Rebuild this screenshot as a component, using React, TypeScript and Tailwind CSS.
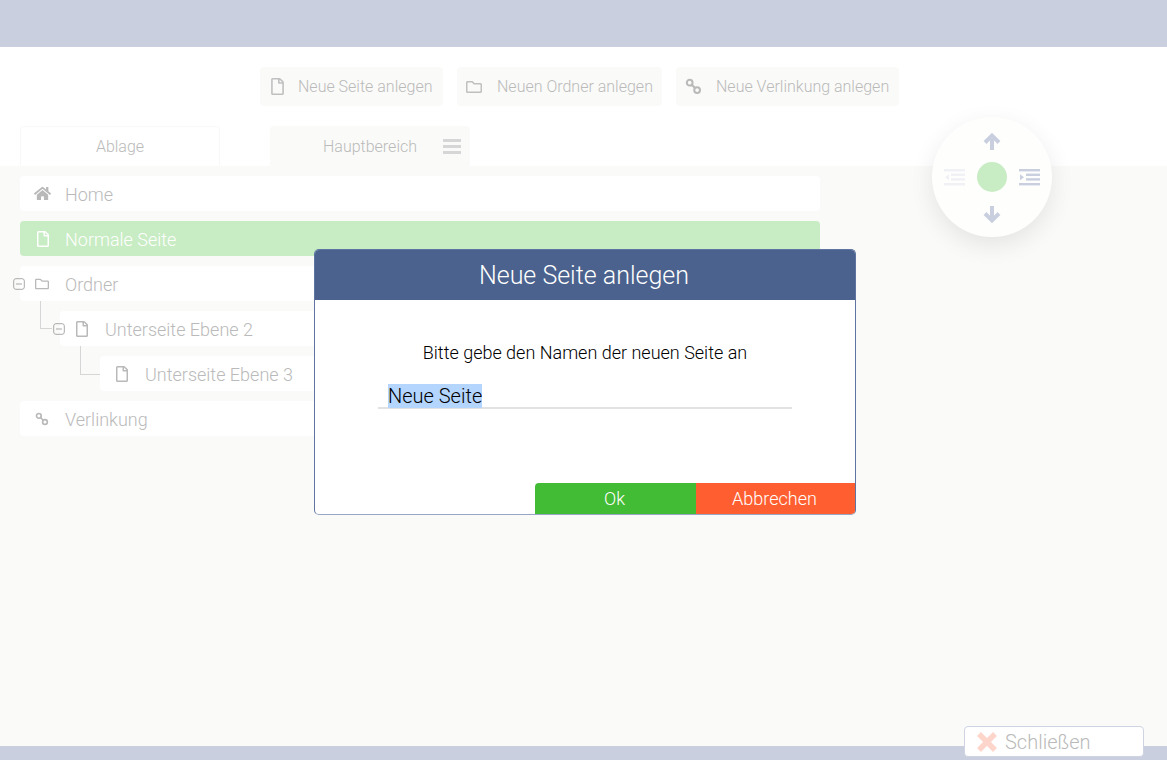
import React from "react";
import { FaRegFile, FaRegFolder, FaHome } from "react-icons/fa";

const LinkIcon = ({ className = "" }: { className?: string }) => (
  <svg viewBox="0 0 16 16" className={className} fill="none" stroke="currentColor" strokeWidth="1.9">
    <circle cx="4.4" cy="4.4" r="2.7" />
    <circle cx="11.4" cy="11.4" r="2.7" />
    <path d="M6.4 6.4l3 3" />
  </svg>
);

const Minus = () => (
  <svg viewBox="0 0 12 12" className="h-3 w-3 text-[#a9a9a9]" fill="none" stroke="currentColor" strokeWidth="1">
    <rect x="0.7" y="0.7" width="10.6" height="10.6" rx="2.2" />
    <path d="M3 6h6" />
  </svg>
);

const Arrow = ({ d, className = "" }: { d: string; className?: string }) => (
  <svg viewBox="0 0 20 20" className={`absolute h-5 w-5 text-[#c9cfdf] ${className}`} fill="none" stroke="currentColor" strokeWidth="4">
    <path d={d} />
  </svg>
);

const Lines = ({ outdent, className = "" }: { outdent?: boolean; className?: string }) => (
  <svg viewBox="0 0 21 17" className={`absolute h-[17px] w-[21px] ${className}`} fill="currentColor">
    <rect x="0" y="0" width="21" height="2.4" />
    <rect x="7" y="4.6" width="14" height="2.4" />
    <rect x="7" y="9.2" width="14" height="2.4" />
    <rect x="0" y="14" width="21" height="2.4" />
    {outdent ? <path d="M5 5.2v6l-4-3z" /> : <path d="M1 5.2v6l4-3z" />}
  </svg>
);

const Tool = ({ icon, label, w, gap }: { icon: React.ReactNode; label: string; w: string; gap: string }) => (
  <div className={`flex h-[39px] items-center rounded bg-[#fafaf9] pl-[9px] text-base font-light text-[#bababa] ${w} ${gap}`}>
    {icon}
    <span>{label}</span>
  </div>
);

const Row = ({ w, ml, icon, label, active, before }: { w: string; ml: string; icon: React.ReactNode; label: string; active?: boolean; before?: React.ReactNode }) => (
  <div className={`relative flex h-[35px] items-center rounded pl-[14px] text-lg font-light ${w} ${ml} ${active ? "bg-[#c8ecc3] text-white" : "bg-white text-[#bababa]"}`}>
    {before}
    <span className="flex w-[31px] shrink-0 items-center">{icon}</span>
    <span className="pt-[2px]">{label}</span>
  </div>
);

export default function App() {
  return (
    <div className="relative flex h-[760px] w-[1167px] flex-col overflow-hidden bg-white font-['Roboto',sans-serif]">
      <div className="h-[47px] bg-[#c9cfdf]" />
      <div className="flex gap-[14px] pl-[260px] pt-5">
        <Tool w="w-[183px]" gap="gap-[12px]" icon={<FaRegFile className="h-[17px] w-[17px] text-[#c0c0c0]" />} label="Neue Seite anlegen" />
        <Tool w="w-[205px]" gap="gap-[15px]" icon={<FaRegFolder className="h-4 w-4 text-[#c0c0c0]" />} label="Neuen Ordner anlegen" />
        <Tool w="w-[223px]" gap="gap-[14px]" icon={<LinkIcon className="h-[17px] w-[17px] text-[#b9b9b9]" />} label="Neue Verlinkung anlegen" />
      </div>
      <div className="mt-5 flex gap-[50px] pl-5">
        <div className="flex h-10 w-[200px] items-center justify-center rounded-t border border-b-0 border-[#f8f8f6] pt-px text-base font-light text-[#bababa]">Ablage</div>
        <div className="flex h-10 w-[200px] items-center rounded-t bg-[#fafaf9] pl-[53px] pt-px text-base font-light text-[#bababa]">
          <span>Hauptbereich</span>
          <svg viewBox="0 0 18 15" className="ml-[26px] h-[15px] w-[18px] text-[#d6d6d6]" fill="currentColor">
            <rect y="0" width="18" height="3" />
            <rect y="6" width="18" height="3" />
            <rect y="12" width="18" height="3" />
          </svg>
        </div>
      </div>
      <div className="relative flex flex-1 flex-col gap-[10px] bg-[#fafaf9] pl-5 pt-[10px]">
        <Row w="w-[800px]" ml="" icon={<FaHome className="h-[17px] w-[17px] text-[#b9b9b9]" />} label="Home" />
        <Row w="w-[800px]" ml="" active icon={<FaRegFile className="ml-px h-4 w-4 text-white" />} label="Normale Seite" />
        <Row
          w="w-[800px]"
          ml=""
          before={<span className="absolute left-[-7px] top-[12px]"><Minus /></span>}
          icon={<FaRegFolder className="ml-px h-[14px] w-[14px] text-[#b9b9b9]" />}
          label="Ordner"
        />
        <Row
          w="w-[760px]"
          ml="ml-10"
          before={
            <>
              <span className="absolute left-[-20px] top-[-10px] h-[28px] w-3 border-b border-l border-[#d6d6d6]" />
              <span className="absolute left-[-7px] top-[12px]"><Minus /></span>
            </>
          }
          icon={<FaRegFile className="h-4 w-4 text-[#b9b9b9]" />}
          label="Unterseite Ebene 2"
        />
        <Row
          w="w-[720px]"
          ml="ml-20"
          before={<span className="absolute left-[-20px] top-[-10px] h-[29px] w-5 border-b border-l border-[#d6d6d6]" />}
          icon={<FaRegFile className="h-4 w-4 text-[#b9b9b9]" />}
          label="Unterseite Ebene 3"
        />
        <Row w="w-[800px]" ml="" icon={<LinkIcon className="ml-px h-[14px] w-[14px] text-[#b9b9b9]" />} label="Verlinkung" />
      </div>
      <div className="h-[14px] bg-[#c9cfdf]" />

      <div className="absolute left-[932px] top-[117px] flex h-[120px] w-[120px] items-center justify-center rounded-full bg-[#fefefd] shadow-[0_8px_24px_rgba(0,0,0,0.09)]">
        <Arrow d="M10 18V4M3 10.5l7-7 7 7" className="left-[50px] top-[15px]" />
        <Lines outdent className="left-[12px] top-[52px] text-[#f0f1f5]" />
        <span className="h-[30px] w-[30px] rounded-full bg-[#c8ecc3]" />
        <Lines className="left-[87px] top-[52px] text-[#c9cfdf]" />
        <Arrow d="M10 2v14M3 9.5l7 7 7-7" className="left-[50px] top-[87px]" />
      </div>

      <div className="absolute left-[314px] top-[249px] flex h-[266px] w-[542px] flex-col overflow-hidden rounded-[5px] border border-[#5f74a0] border-b-[#98a5c4] bg-white">
        <div className="flex h-[50px] shrink-0 items-center justify-center bg-[#4a628d] pr-0.5 pt-px text-[25px] font-light text-white">Neue Seite anlegen</div>
        <div className="mt-[41px] text-center text-lg font-light leading-6 text-black">Bitte gebe den Namen der neuen Seite an</div>
        <div className="ml-[63px] mt-[19px] h-[25px] w-[414px] border-b-2 border-[#e2e2e2] pl-[10px] text-xl font-light leading-6 text-black">
          <span className="inline-block h-6 bg-[#b4d5fe]">Neue Seite</span>
        </div>
        <div className="mt-auto flex justify-end">
          <div className="flex h-[31px] w-[161px] items-center justify-center rounded-tl bg-[#42bb35] pr-0.5 text-lg font-light text-white">Ok</div>
          <div className="flex h-[31px] w-[159px] items-center justify-center bg-[#ff5f30] pr-0.5 text-lg font-light text-white">Abbrechen</div>
        </div>
      </div>

      <div className="absolute left-[964px] top-[726px] flex h-[31px] w-[180px] items-center rounded border border-[#cfd4e2] bg-white pl-[11px] text-xl font-light text-[#bababa]">
        <svg viewBox="0 0 22 22" className="mr-[7px] h-[22px] w-[22px] text-[#fdd5cb]" fill="none" stroke="currentColor" strokeWidth="5.5">
          <path d="M3 3l16 16M19 3L3 19" />
        </svg>
        <span>Schließen</span>
      </div>
    </div>
  );
}
